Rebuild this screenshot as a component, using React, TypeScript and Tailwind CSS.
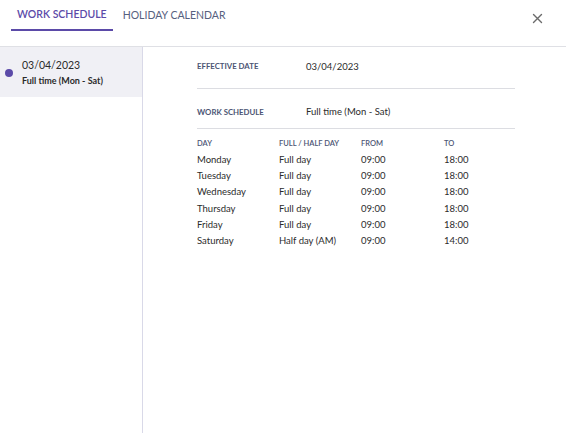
import React from "react";

const rows = [
  ["Monday", "Full day", "09:00", "18:00"],
  ["Tuesday", "Full day", "09:00", "18:00"],
  ["Wednesday", "Full day", "09:00", "18:00"],
  ["Thursday", "Full day", "09:00", "18:00"],
  ["Friday", "Full day", "09:00", "18:00"],
  ["Saturday", "Half day (AM)", "09:00", "14:00"],
];

export default function App() {
  return (
    <div className="w-[566px] h-[433px] bg-white flex flex-col font-['Lato','Liberation_Sans',sans-serif] text-[#2b2b2b] overflow-hidden">
      <div className="h-[47px] shrink-0 border-b border-[#dfe0e5] flex items-start justify-between pl-[11px] pr-[23px]">
        <div className="flex">
          <div className="px-[6px] h-[31px] flex items-center border-b-2 border-[#5b4aa8] text-[10.5px] font-semibold text-[#5b4aa8] pt-[1px]">
            WORK SCHEDULE
          </div>
          <div className="px-[10px] h-[31px] flex items-center text-[10.5px] text-[#56607e] pt-[1px]">
            HOLIDAY CALENDAR
          </div>
        </div>
        <div className="h-[37px] flex items-center">
          <svg width="11" height="11" viewBox="0 0 11 11">
            <path d="M1.5 1.5 L9.5 9.5 M9.5 1.5 L1.5 9.5" stroke="#6b6b6b" strokeWidth="1.4" strokeLinecap="round" />
          </svg>
        </div>
      </div>
      <div className="flex flex-1">
        <div className="w-[143px] shrink-0 border-r border-[#d9d9e8]">
          <div className="h-[50px] bg-[#f0f0f5] flex items-center pl-[5px]">
            <div className="w-[8px] h-[8px] rounded-full bg-[#5b4aa8] mt-[2px]" />
            <div className="ml-[9px] flex flex-col">
              <span className="text-[10.5px] leading-[16px] text-[#2b2b2b]">03/04/2023</span>
              <span className="text-[9px] leading-[14px] font-bold text-[#2b2b2b] mt-[1px]">Full time (Mon - Sat)</span>
            </div>
          </div>
        </div>
        <div className="flex-1 pl-[54px] pr-[51px]">
          <div className="h-[42px] flex items-center border-b border-[#dcdde2] pb-[1px]">
            <span className="w-[109px] text-[7.8px] font-bold text-[#4c5574]">EFFECTIVE DATE</span>
            <span className="text-[9.5px]">03/04/2023</span>
          </div>
          <div className="pt-[16px] pb-[9px] leading-[14px] flex items-center border-b border-[#dcdde2]">
            <span className="w-[109px] text-[7.8px] font-bold text-[#4c5574]">WORK SCHEDULE</span>
            <span className="text-[9.5px]">Full time (Mon - Sat)</span>
          </div>
          <div className="mt-[7px]">
            <div className="grid grid-cols-[82px_82px_83px_1fr] h-[16px] items-center text-[7.5px] font-semibold text-[#4c5574]">
              <span>DAY</span>
              <span>FULL / HALF DAY</span>
              <span>FROM</span>
              <span>TO</span>
            </div>
            {rows.map((r) => (
              <div key={r[0]} className="grid grid-cols-[82px_82px_83px_1fr] h-[16.2px] items-center text-[9.5px]">
                {r.map((c, i) => (
                  <span key={i}>{c}</span>
                ))}
              </div>
            ))}
          </div>
        </div>
      </div>
    </div>
  );
}
